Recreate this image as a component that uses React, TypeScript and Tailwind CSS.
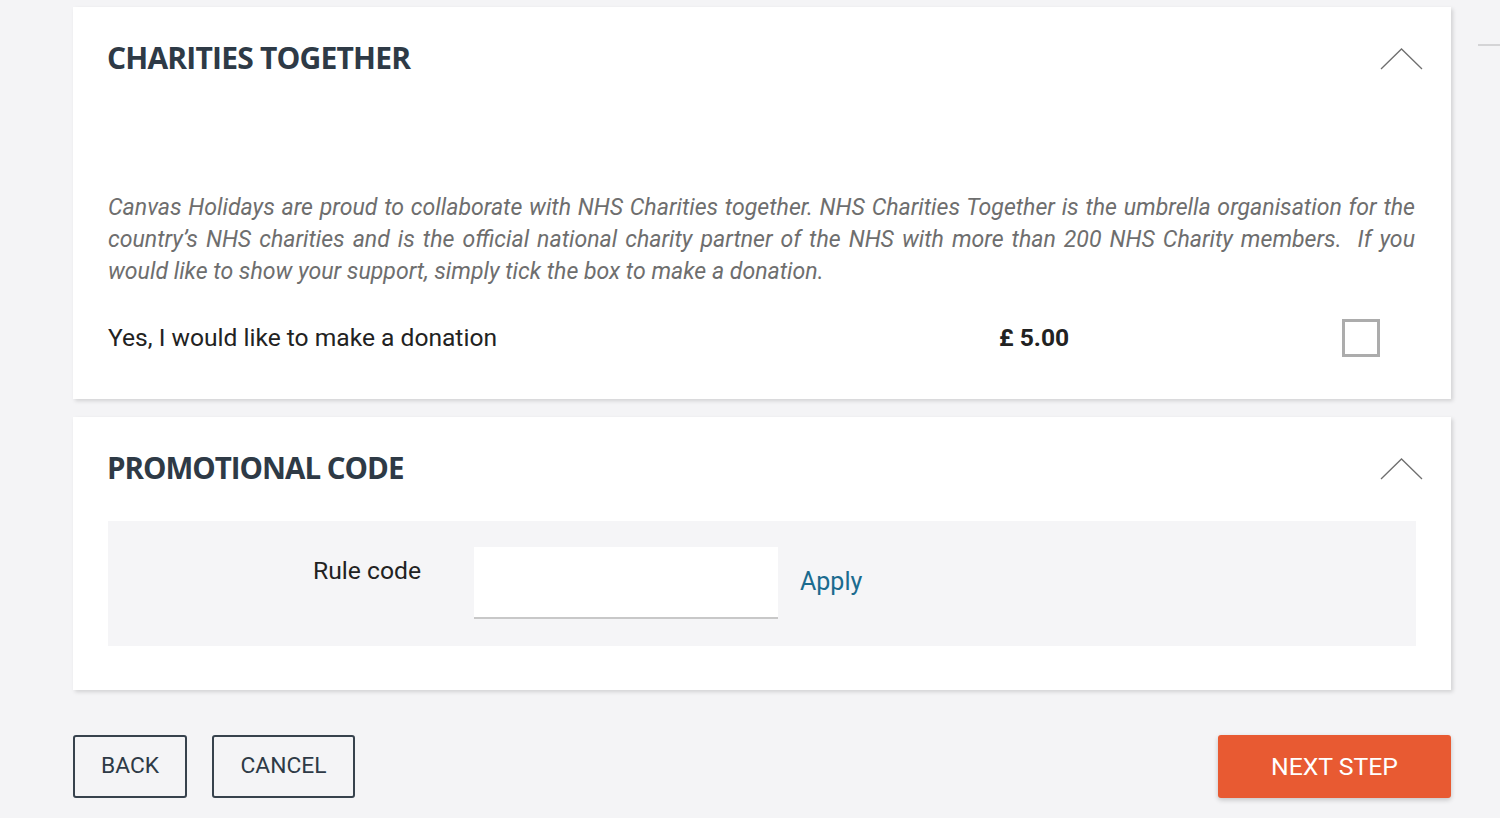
import React from "react";

function Chevron() {
  return (
    <svg width="43" height="22" viewBox="0 0 43 22" className="mt-[-2px]">
      <polyline points="1,21 21.5,1 42,21" fill="none" stroke="#6f6f6f" strokeWidth="1.3" />
    </svg>
  );
}

export default function App() {
  const body = { fontFamily: "Roboto, 'Liberation Sans', sans-serif" };
  const head = { fontFamily: "'Open Sans', 'Noto Sans', sans-serif" };
  return (
    <div className="min-h-[818px] w-full bg-[#f4f4f6] flex" style={body}>
      <div className="ml-[73px] w-[1378px] pt-[7px] flex flex-col">
        {/* Card 1 */}
        <div className="bg-white shadow-[2px_2px_4px_rgba(0,0,0,0.14)] pl-[35px] pr-[28px] pt-[33px] pb-[42px]">
          <div className="flex items-start justify-between h-[36px]">
            <h2 className="ml-[-1px] text-[30px] leading-[36px] font-bold text-[#2e3a46] tracking-[-0.8px]" style={head}>
              CHARITIES TOGETHER
            </h2>
            <div className="pt-[10px]"><Chevron /></div>
          </div>
          <div className="mt-[116px] pr-[8px] italic text-[23.1px] leading-[32px] text-[#6e6e6e]">
            <p className="text-justify [text-align-last:justify]">
              Canvas Holidays are proud to collaborate with NHS Charities together. NHS Charities Together is the umbrella organisation for the
            </p>
            <p className="text-justify [text-align-last:justify]">
              country’s NHS charities and is the official national charity partner of the NHS with more than 200 NHS Charity members.&nbsp; If you
            </p>
            <p>would like to show your support, simply tick the box to make a donation.</p>
          </div>
          <div className="mt-[31px] flex items-center h-[38px]">
            <div className="w-[891px] text-[24.6px] text-[#222]">Yes, I would like to make a donation</div>
            <div className="w-[343px] text-[24.6px] font-bold text-[#222]">£ 5.00</div>
            <div className="w-[38px] h-[38px] border-[3px] border-[#acacac] bg-white" />
          </div>
        </div>

        {/* Card 2 */}
        <div className="mt-[18px] bg-white shadow-[2px_2px_4px_rgba(0,0,0,0.14)] pl-[35px] pr-[28px] pt-[33px] pb-[44px]">
          <div className="flex items-start justify-between h-[36px]">
            <h2 className="ml-[-1px] text-[29.5px] leading-[36px] font-bold text-[#2e3a46] tracking-[-1px]" style={head}>
              PROMOTIONAL CODE
            </h2>
            <div className="pt-[10px]"><Chevron /></div>
          </div>
          <div className="mt-[35px] mr-[7px] h-[125px] bg-[#f5f5f7] flex items-start pt-[26px]">
            <div className="w-[313px] text-right text-[24.7px] leading-[30px] text-[#222] mt-[9px]">Rule code</div>
            <input
              className="ml-[53px] w-[304px] h-[72px] bg-white border-b-2 border-[#c8c8c8] outline-none px-3 text-[20px]"
              type="text"
            />
            <div className="ml-[22px] self-stretch flex items-center pb-[2px] h-[72px] text-[25px] text-[#1b6b8f]">Apply</div>
          </div>
        </div>

        {/* Buttons */}
        <div className="mt-[45px] flex items-start justify-between">
          <div className="flex gap-[25px]">
            <button className="h-[63px] w-[114px] border-2 border-[#37424d] rounded-[3px] text-[22.8px] text-[#2e3a46]">
              BACK
            </button>
            <button className="h-[63px] w-[143px] border-2 border-[#37424d] rounded-[3px] text-[22.8px] text-[#2e3a46]">
              CANCEL
            </button>
          </div>
          <button className="h-[63px] w-[233px] bg-[#e85a32] rounded-[3px] text-white text-[24.8px] shadow-[0_2px_5px_rgba(0,0,0,0.2)]">
            NEXT STEP
          </button>
        </div>
      </div>
      <div className="flex-1 pl-[27px]">
        <div className="mt-[44px] h-[2px] bg-[#d4d4d6]" />
      </div>
    </div>
  );
}
